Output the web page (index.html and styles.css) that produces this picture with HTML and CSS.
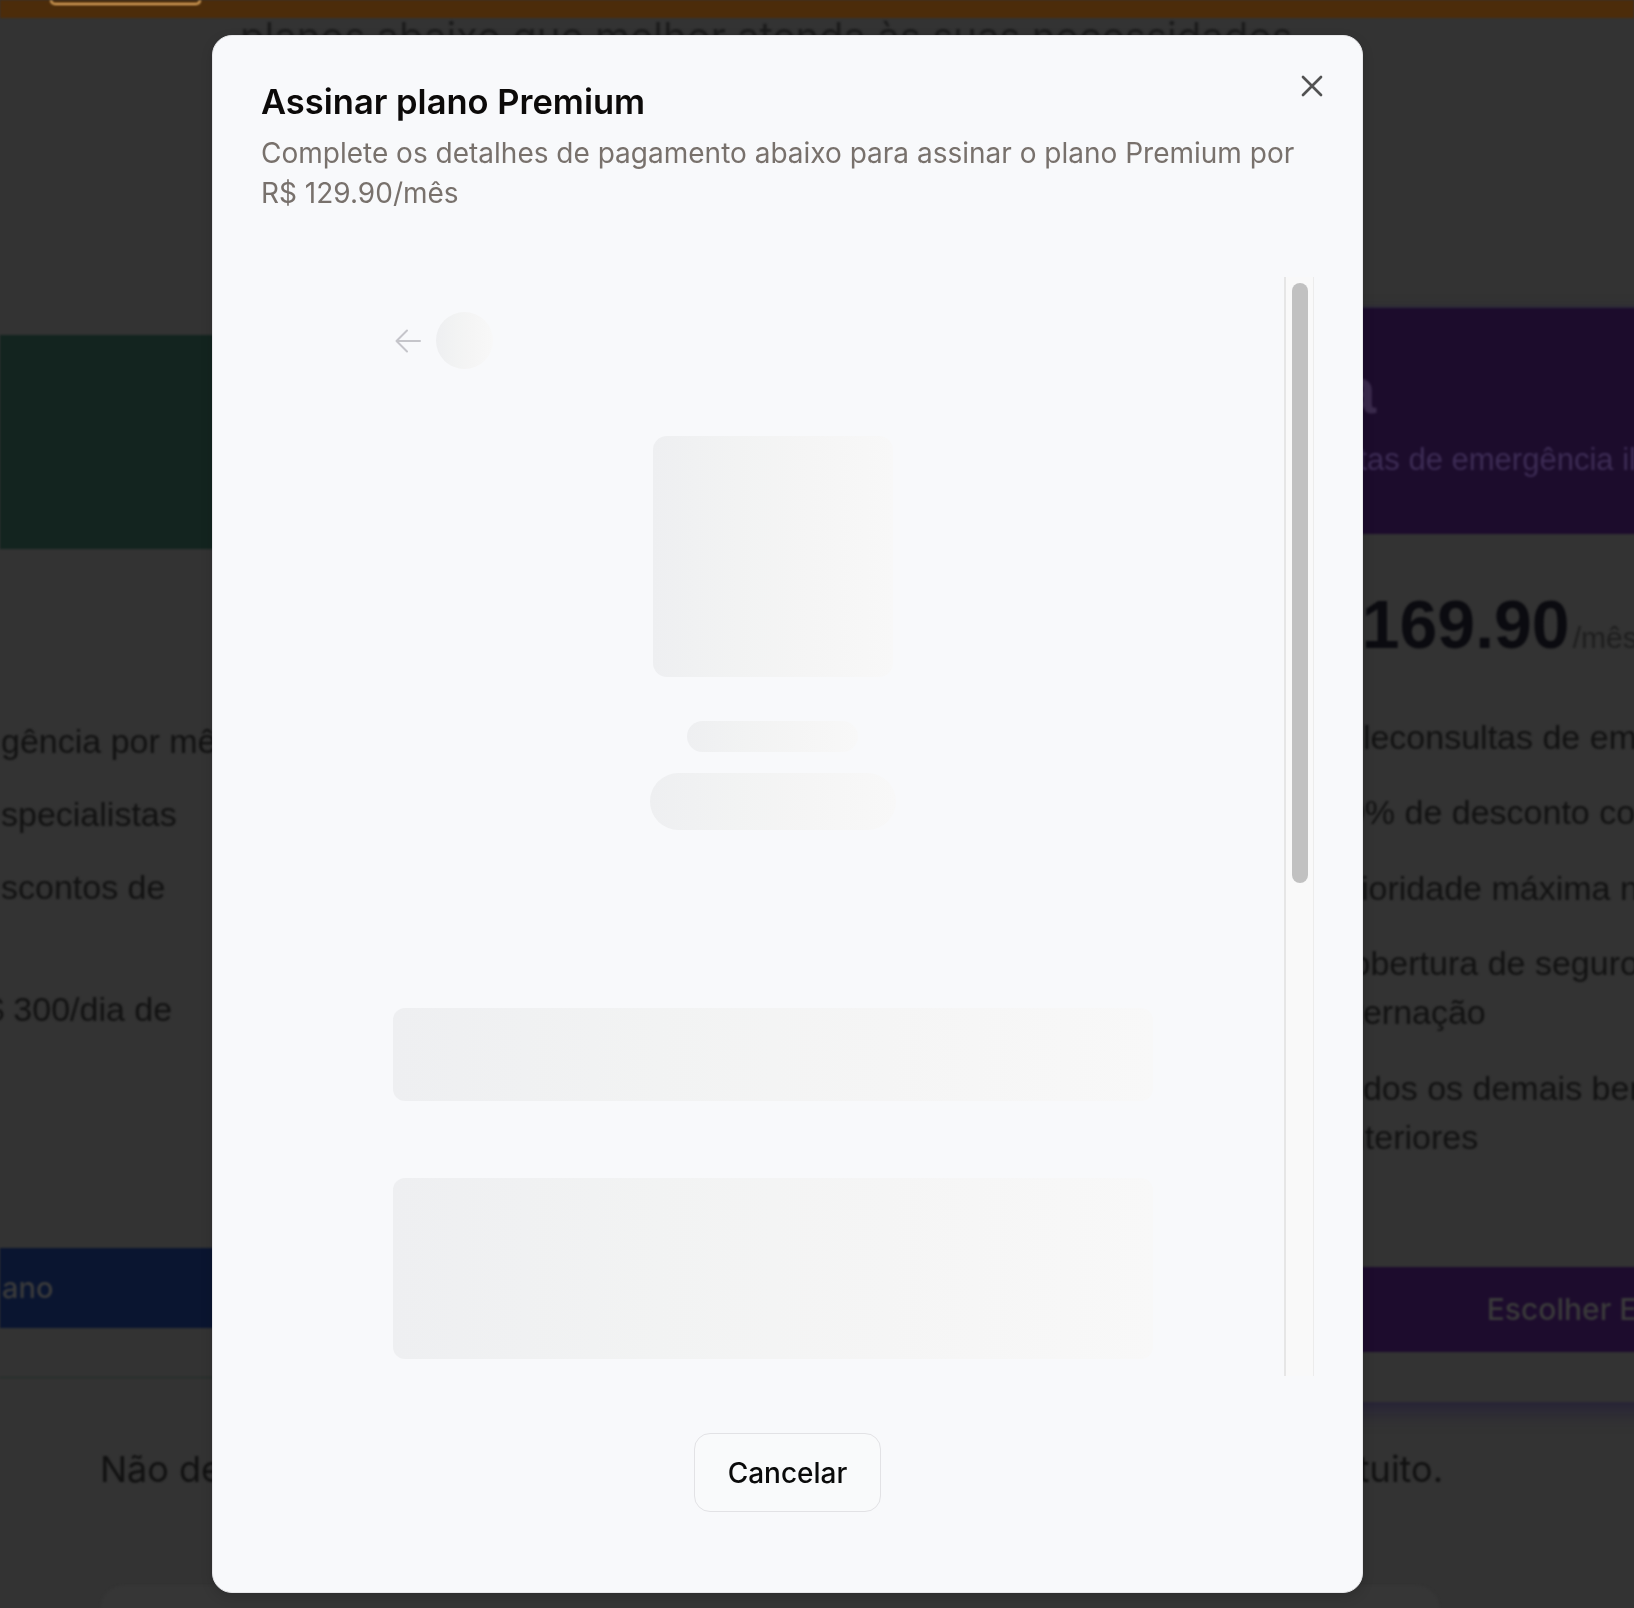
FILE: index.html
```html
<!DOCTYPE html>
<html lang="pt-BR">
<head>
<meta charset="utf-8">
<title>Assinar plano Premium</title>
<link rel="stylesheet" href="styles.css">
</head>
<body>
<div class="page">
  <header class="topbar"><span class="topbar-btn"></span></header>
  <p class="lead">planos abaixo que melhor atenda às suas necessidades</p>
  <section class="plans">
    <article class="plan plan-basic">
      <div class="plan-head"></div>
      <ul class="plan-list">
        <li>gência por mês</li>
        <li>specialistas</li>
        <li class="two-line">scontos de</li>
        <li class="two-line shift">$ 300/dia de</li>
      </ul>
      <div class="plan-btn">ano</div>
    </article>
    <article class="plan plan-extra">
      <div class="plan-head">
        <h3 class="plan-title">Extra</h3>
        <p class="plan-sub">Teleconsultas de emergência ilimitadas</p>
      </div>
      <div class="plan-body">
        <p class="price"><span class="cur">R$ </span><span class="amount">169.90</span><span class="per">/mês</span></p>
        <ul class="plan-list">
          <li>Teleconsultas de emergência ilimitadas</li>
          <li>20% de desconto com parceiros</li>
          <li>Prioridade máxima no atendimento</li>
          <li>Cobertura de seguro de R$ 500/dia de<br>internação</li>
          <li>Todos os demais benefícios dos planos<br>anteriores</li>
        </ul>
        <div class="plan-btn">Escolher Extra</div>
      </div>
    </article>
  </section>
  <p class="note"><span>Não deseja assinar agora?</span><span>Continue com o plano gratuito.</span></p>
  <div class="faq"></div>
</div>

<div class="dialog" role="dialog" aria-modal="true">
  <button class="dialog-close" type="button" aria-label="Fechar">
    <svg width="36" height="36" viewBox="0 0 24 24" fill="none" stroke="currentColor" stroke-width="1.8" stroke-linecap="round" stroke-linejoin="round"><path d="M18 6 6 18M6 6l12 12"/></svg>
  </button>
  <h2 class="dialog-title">Assinar plano Premium</h2>
  <p class="dialog-desc">Complete os detalhes de pagamento abaixo para assinar o plano Premium por R$ 129.90/mês</p>

  <div class="checkout">
    <div class="checkout-view">
      <div class="sk-col">
        <div class="sk-top">
          <svg class="sk-back" width="26" height="24" viewBox="0 0 26 24" fill="none" stroke="currentColor" stroke-width="2" stroke-linecap="round" stroke-linejoin="round"><path d="M25 12H1.5M12 1.5 1.5 12 12 22.5"/></svg>
          <div class="sk sk-avatar"></div>
        </div>
        <div class="sk sk-image"></div>
        <div class="sk sk-line"></div>
        <div class="sk sk-pill"></div>
        <div class="sk sk-field"></div>
        <div class="sk sk-card"></div>
      </div>
    </div>
    <div class="scrollbar"><div class="thumb"></div></div>
  </div>

  <div class="dialog-footer">
    <button class="btn-cancel" type="button">Cancelar</button>
  </div>
</div>
</body>
</html>
```

FILE: styles.css
```css
* { box-sizing: border-box; }
html, body { margin: 0; padding: 0; }
body {
  width: 1634px;
  height: 1608px;
  overflow: hidden;
  background: #333333;
  font-family: Inter, "Noto Sans", sans-serif;
}

/* ---------- background page (dimmed) ---------- */
.page { filter: blur(0.8px); }

.topbar {
  position: relative;
  z-index: 1;
  height: 18px;
  background: #4c2c0a;
  padding-left: 50px;
}
.topbar-btn {
  display: block;
  width: 151px;
  height: 5px;
  border: 2px solid #f0b466;
  border-top: none;
  border-radius: 0 0 8px 8px;
}

.lead {
  margin: -9px 0 0 240px;
  font-size: 40px;
  line-height: 56px;
  color: #1c1c1c;
  white-space: nowrap;
}

.plans {
  display: flex;
  align-items: flex-start;
  gap: 710px;
  margin-top: 241px;
}
.plan {
  flex: none;
  display: flex;
  flex-direction: column;
}

.plan-list {
  list-style: none;
  margin: 0;
  padding: 0;
  font-family: "Liberation Sans", Arial, sans-serif;
  font-size: 34px;
  line-height: 49px;
  color: #121212;
  white-space: nowrap;
}

.plan-basic {
  width: 480px;
  height: 1043px;
  margin-top: 29px;
  border-bottom: 1px solid #1f2d27;
}
.plan-basic .plan-head {
  height: 214px;
  background: #13241f;
}
.plan-basic .plan-list {
  margin-top: 168px;
  padding-left: 1px;
}
.plan-basic .plan-list li + li { margin-top: 24px; }
.plan-list .two-line { height: 98px; }
.plan-list .shift { margin-left: -16px; }
.plan-basic .plan-btn {
  margin-top: auto;
  margin-bottom: 49px;
  height: 80px;
  background: #0a1530;
  color: #3b3b3b;
  font-size: 29px;
  font-weight: 500;
  line-height: 80px;
  padding-left: 2px;
}

.plan-extra {
  width: 794px;
  border-top: 2px solid #2c2937;
  box-shadow: 0 10px 18px rgba(25, 15, 60, 0.45);
}
.plan-extra .plan-head {
  height: 226px;
  background: #1c0c2c;
  padding: 51px 26px 0;
}
.plan-title {
  margin: 0;
  font-family: "Liberation Sans", Arial, sans-serif;
  font-weight: 700;
  font-size: 64px;
  line-height: 64px;
  color: #3a2a4c;
}
.plan-sub {
  margin: 17px 0 0 -4px;
  font-family: "Liberation Sans", Arial, sans-serif;
  font-size: 31px;
  line-height: 40px;
  color: #3d2c55;
  white-space: nowrap;
}
.plan-body { padding: 56px 26px 50px; }
.price {
  margin: 0;
  padding-left: 99px;
  font-family: "Liberation Sans", Arial, sans-serif;
  font-size: 68px;
  line-height: 68px;
  white-space: nowrap;
  color: #0b0b10;
}
.cur { font-size: 30px; font-weight: 700; line-height: 1; }
.amount { font-weight: 700; }
.per { font-size: 30px; line-height: 1; color: #1e1e1e; margin-left: 3px; }
.plan-extra .plan-list {
  margin-top: 54.5px;
  padding-left: 111px;
}
.plan-extra .plan-list li + li { margin-top: 26.5px; }
.plan-extra .plan-btn {
  margin-top: 105.5px;
  height: 85px;
  background: #1d0c2d;
  color: #3a3a3a;
  font-size: 30px;
  font-weight: 500;
  line-height: 85px;
  text-align: center;
  padding-left: 6px;
}

.note {
  display: flex;
  justify-content: space-between;
  width: 1343px;
  margin: 40px 0 0 100px;
  font-size: 36px;
  line-height: 54px;
  color: #111111;
}
.faq {
  width: 1340px;
  height: 300px;
  margin: 89px 0 0 100px;
  background: #363636;
  border-radius: 24px;
}

/* ---------- dialog ---------- */
.dialog {
  position: fixed;
  left: 212px;
  top: 35px;
  width: 1151px;
  height: 1558px;
  background: #f8f9fb;
  border: 1px solid #e7e7ea;
  border-radius: 20px;
  box-shadow: 0 4px 12px rgba(0, 0, 0, 0.15);
  padding: 46px 48px 48px;
  display: flex;
  flex-direction: column;
}
.dialog-close {
  position: absolute;
  top: 32px;
  right: 32px;
  width: 36px;
  height: 36px;
  padding: 0;
  border: 0;
  background: none;
  color: #525252;
}
.dialog-close svg { display: block; }
.dialog-title {
  margin: 0;
  font-size: 34.5px;
  line-height: 40px;
  font-weight: 600;
  color: #0c0a09;
}
.dialog-desc {
  margin: 11px 0 0;
  font-size: 28px;
  line-height: 40px;
  color: #78716c;
}

.checkout {
  margin-top: 64px;
  height: 1099px;
  display: flex;
  flex: none;
}
.checkout-view {
  flex: 1;
  overflow: hidden;
}
.scrollbar {
  width: 30px;
  border-left: 2px solid #e6e6e6;
  border-right: 1px solid #ececec;
  background: #f9f9f9;
  padding: 6px 5px 0 6px;
}
.thumb {
  height: 600px;
  border-radius: 8px;
  background: #c1c1c1;
}

.sk-col {
  width: 760px;
  margin: 0 auto;
  display: flex;
  flex-direction: column;
  align-items: center;
}
.sk {
  background: linear-gradient(90deg, #eeeff1 0%, #f2f3f3 35%, #f5f5f5 65%, #f8f8f8 100%);
}
.sk-top {
  align-self: stretch;
  display: flex;
  align-items: center;
  gap: 15px;
  margin-top: 35px;
  padding-left: 2px;
}
.sk-back { display: block; color: #c5c5ca; }
.sk-avatar { width: 57px; height: 57px; border-radius: 50%; }
.sk-image { margin-top: 67px; width: 240px; height: 241px; border-radius: 14px; }
.sk-line { margin-top: 44px; width: 171px; height: 31px; border-radius: 16px; }
.sk-pill { margin-top: 21px; width: 246px; height: 57px; border-radius: 29px; }
.sk-field { margin-top: 178px; width: 760px; height: 93px; border-radius: 12px; }
.sk-card { margin-top: 77px; width: 760px; height: 181px; border-radius: 12px; }

.dialog-footer {
  margin-top: 57px;
  display: flex;
  justify-content: center;
}
.btn-cancel {
  height: 79px;
  padding: 0 33px;
  border: 1.5px solid #e2e2e5;
  border-radius: 16px;
  background: #f9fafb;
  font-family: Inter, "Noto Sans", sans-serif;
  font-size: 28px;
  font-weight: 500;
  color: #0a0a0a;
}
```
